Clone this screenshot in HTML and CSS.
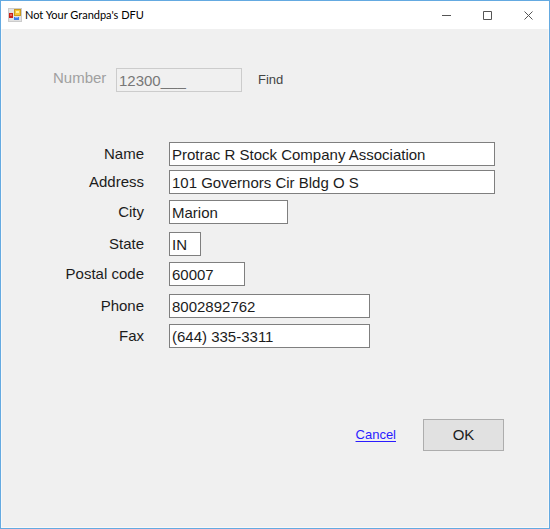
FILE: index.html
```html
<!DOCTYPE html>
<html lang="en">
<head>
<meta charset="utf-8">
<title>Not Your Grandpa's DFU</title>
<link rel="stylesheet" href="styles.css">
</head>
<body>
<main class="window">
  <header class="titlebar">
    <svg class="app-icon" viewBox="0 0 14 14" aria-hidden="true">
      <rect x="0.5" y="0.5" width="13" height="13" fill="#e2e2e2" stroke="#cccccc"/>
      <rect x="1" y="5" width="4" height="5" fill="#c92018"/>
      <rect x="2" y="6" width="2" height="2" fill="#e8685c"/>
      <rect x="6.5" y="1.500" width="6" height="6" fill="#f5c736" stroke="#c99a20"/>
      <rect x="8" y="3" width="3" height="2" fill="#fff0a0"/>
      <rect x="6" y="9" width="5" height="3" fill="#3f7ee8"/>
      <rect x="7" y="9" width="3" height="1" fill="#83b2ff"/>
    </svg>
    <h1 class="title">Not Your Grandpa's DFU</h1>
    <div class="controls">
      <button class="control" type="button" aria-label="Minimize"><svg class="glyph" viewBox="0 0 9 9"><path d="M0 4.5h9"/></svg></button>
      <button class="control" type="button" aria-label="Maximize"><svg class="glyph" viewBox="0 0 9 9"><path d="M.5 .5h8v8h-8z"/></svg></button>
      <button class="control" type="button" aria-label="Close"><svg class="glyph" viewBox="0 0 9 9"><path d="M.5 .5l8 8M8.500 .5l-8 8"/></svg></button>
    </div>
  </header>
  <form class="content">
    <div class="lookup">
      <label class="lookup-label" for="number">Number</label>
      <input class="field lookup-field" id="number" value="12300___" disabled>
      <button class="find" type="button">Find</button>
    </div>
    <div class="details">
      <label class="label" for="name">Name</label>
      <input class="field" id="name" value="Protrac R Stock Company Association">
      <label class="label" for="address">Address</label>
      <input class="field" id="address" value="101 Governors Cir Bldg O S">
      <label class="label" for="city">City</label>
      <input class="field city" id="city" value="Marion">
      <label class="label" for="state">State</label>
      <input class="field state" id="state" value="IN">
      <label class="label" for="postal">Postal code</label>
      <input class="field postal" id="postal" value="60007">
      <label class="label" for="phone">Phone</label>
      <input class="field phone" id="phone" value="8002892762">
      <label class="label" for="fax">Fax</label>
      <input class="field phone" id="fax" value="(644) 335-3311">
    </div>
    <div class="actions">
      <a class="cancel" href="#">Cancel</a>
      <button class="ok" type="button">OK</button>
    </div>
  </form>
</main>
</body>
</html>
```
FILE: styles.css
```css
* {
  box-sizing: border-box;
}

body {
  margin: 0;
  font-family: "Liberation Sans", Arial, sans-serif;
  font-size: 15px;
  line-height: 20px;
  color: #1c1c1c;
}

.window {
  display: flex;
  flex-direction: column;
  min-height: 100vh;
  border: 1px solid #64aae1;
  background: #f0f0f0;
}

.titlebar {
  display: flex;
  align-items: center;
  height: 28px;
  padding-left: 7px;
  background: #fff;
}

.app-icon {
  width: 14px;
  height: 14px;
  margin-right: 3px;
}

.title {
  flex: 1;
  margin: 0;
  font: 11px/16px Lato, "Segoe UI", sans-serif;
  color: #000;
}

.controls {
  display: flex;
}

.control {
  display: flex;
  align-items: center;
  justify-content: center;
  width: 41px;
  height: 26px;
  padding: 0;
  border: 0;
  background: none;
}

.glyph {
  width: 9px;
  height: 9px;
  fill: none;
  stroke: #555;
  stroke-width: 1;
}

.content {
  flex: 1;
  padding: 39px 53px 0 51px;
  border: 1px solid #f8f8f8;
  border-top: 0;
}

.lookup {
  display: flex;
  align-items: center;
}

.lookup-label {
  width: 63px;
  padding-bottom: 4px;
  color: #a0a0a0;
}

.field {
  width: 100%;
  height: 24px;
  padding: 0 2px;
  border: 1px solid #7f7f7f;
  border-radius: 0;
  background: #fff;
  font: inherit;
  color: inherit;
}

.lookup-field {
  width: 126px;
  border-color: #ccc;
  background: #f0f0f0;
  color: #777;
}

.find {
  margin-left: 16px;
  padding: 0;
  border: 0;
  background: none;
  font: inherit;
  font-size: 13px;
  color: #444;
}

.details {
  display: grid;
  grid-template-columns: 91px 1fr;
  grid-template-rows: 28px 30px 32px 30px 32px 30px 24px;
  column-gap: 25px;
  margin-top: 50px;
}

.label {
  height: 24px;
  line-height: 24px;
  text-align: right;
}

.city {
  width: 119px;
}

.state {
  width: 32px;
}

.postal {
  width: 76px;
}

.phone {
  width: 201px;
}

.actions {
  display: flex;
  align-items: center;
  justify-content: flex-end;
  gap: 27px;
  margin: 71px -9px 0 0;
}

.cancel {
  font-size: 13px;
  color: #2a1cff;
  text-underline-offset: 2px;
}

.ok {
  width: 81px;
  height: 32px;
  padding: 0;
  border: 1px solid #adadad;
  background: #e1e1e1;
  font: inherit;
  color: inherit;
}
```
